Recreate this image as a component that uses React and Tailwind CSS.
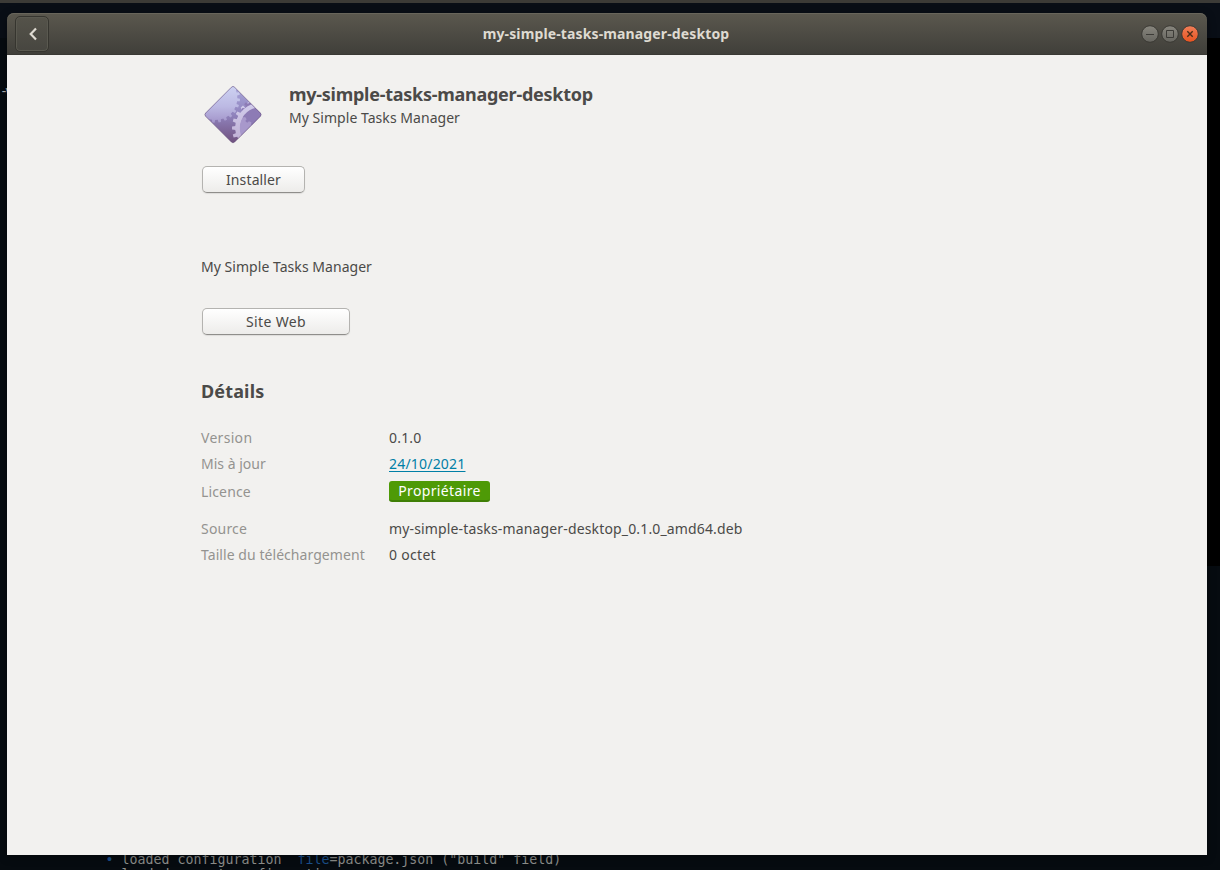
import React from "react";

function gearPath(cx, cy, inner, outer, teeth, offset = 0) {
  const step = (Math.PI * 2) / teeth;
  const point = (r, a) =>
    `${(cx + r * Math.cos(a)).toFixed(1)} ${(cy + r * Math.sin(a)).toFixed(1)}`;
  const parts = [];
  for (let i = 0; i < teeth; i += 1) {
    const a = offset + i * step;
    parts.push(
      point(inner, a - step * 0.27),
      point(outer, a - step * 0.19),
      point(outer, a + step * 0.19),
      point(inner, a + step * 0.27)
    );
  }
  return `M${parts.join("L")}Z`;
}

function PackageIcon() {
  return (
    <svg className="block h-[70px] w-[75px]" viewBox="0 0 225 210" aria-hidden="true">
      <defs>
        <linearGradient id="base" x1="0" y1="0" x2="0" y2="1">
          <stop offset="0" stopColor="#aaa9dc" />
          <stop offset="0.5" stopColor="#9083bd" />
          <stop offset="1" stopColor="#6e4e7b" />
        </linearGradient>
        <linearGradient id="gear" gradientUnits="userSpaceOnUse" x1="0" y1="25" x2="0" y2="135">
          <stop offset="0" stopColor="#cdd2f2" />
          <stop offset="0.55" stopColor="#bcb9e3" />
          <stop offset="1" stopColor="#a294c9" />
        </linearGradient>
        <linearGradient id="ring" gradientUnits="userSpaceOnUse" x1="0" y1="65" x2="0" y2="195">
          <stop offset="0" stopColor="#d3cfee" />
          <stop offset="1" stopColor="#bfaed3" />
        </linearGradient>
        <clipPath id="diamond">
          <path d="M109 28Q114 22 119 28L196 105Q201 110 196 115L119 192Q114 197 109 192L32 115Q27 110 32 105Z" />
        </clipPath>
      </defs>
      <g clipPath="url(#diamond)">
        <path fill="url(#base)" d="M25 20H205V200H25Z" />
        <path fill="url(#gear)" d={gearPath(61, 60, 66, 74, 24, 0.08)} />
        <path fill="url(#ring)" d={gearPath(196, 150, 74, 85, 22, 0)} />
        <circle cx="196" cy="150" r="62" fill="#a898cb" />
        <path fill="#8d7bb5" d={gearPath(180, 102, 33, 40, 12, 0.2)} />
        <path
          fill="none"
          stroke="url(#ring)"
          strokeWidth="13"
          d="M129 165A68.5 68.5 0 0 1 196 81.5"
        />
      </g>
      <path
        fill="none"
        stroke="#5b4472"
        strokeOpacity="0.5"
        strokeWidth="3"
        d="M109 28Q114 22 119 28L196 105Q201 110 196 115L119 192Q114 197 109 192L32 115Q27 110 32 105Z"
      />
    </svg>
  );
}

function TitleBar() {
  return (
    <header className="flex h-[42px] items-center rounded-t-[7px] border-b border-[#3a3934] bg-linear-to-b from-[#5b584e] to-[#403f3a] pr-2 pl-2 shadow-[inset_0_1px_0_#68655b]">
      <button
        type="button"
        aria-label="Retour"
        className="flex h-9 w-[34px] items-center justify-center rounded-[5px] border border-[#36352f] bg-linear-to-b from-[#55534a] to-[#474640] pl-px shadow-[inset_0_0_0_1px_#5a5950]"
      >
        <svg className="h-3.5 w-3.5" viewBox="0 0 14 14" fill="none">
          <path d="M10 1.5L4.7 7L10 12.5" stroke="#dfdbd2" strokeWidth="2.2" />
        </svg>
      </button>
      <h1 className="flex-1 pl-[24px] text-center text-[14px] leading-5 font-bold text-[#dfdbd2]">
        <span className="tracking-[0.13px]">my-simple-tasks-manager-desktop</span>
      </h1>
      <svg className="h-5 w-[60px]" viewBox="0 0 60 20" fill="none">
        <defs>
          <linearGradient id="grey" x1="0" y1="0" x2="0" y2="1">
            <stop stopColor="#88867e" />
            <stop offset="1" stopColor="#66655f" />
          </linearGradient>
          <linearGradient id="orange" x1="0" y1="0" x2="0" y2="1">
            <stop stopColor="#f07f59" />
            <stop offset="1" stopColor="#e9531f" />
          </linearGradient>
        </defs>
        <circle cx="11" cy="10" r="8.3" fill="url(#grey)" stroke="#3a3934" />
        <circle cx="31" cy="10" r="8.3" fill="url(#grey)" stroke="#3a3934" />
        <circle cx="51" cy="10" r="8.3" fill="url(#orange)" stroke="#3a3934" />
        <path d="M7 10.5H15" stroke="#3c3b37" />
        <path d="M27.5 6.5H34.5V13.5H27.5Z" stroke="#3c3b37" />
        <path d="M48.3 7.3L53.7 12.7M53.7 7.3L48.3 12.7" stroke="#4b2d18" strokeWidth="1.4" />
      </svg>
    </header>
  );
}

function Button({ className, children }) {
  return (
    <button
      type="button"
      className={`block rounded-[5px] border border-[#b4b3b0] border-b-[#8f8e8b] bg-linear-to-b from-white to-[#edecea] text-center leading-[26px] shadow-[0_1px_1px_#dddcda] ${className}`}
    >
      {children}
    </button>
  );
}

function Detail({ label, labelClass, className, children }) {
  return (
    <div className={`flex items-center ${className}`}>
      <dt className="w-[188px] text-[#949390]">
        <span className={labelClass}>{label}</span>
      </dt>
      <dd>{children}</dd>
    </div>
  );
}

function Terminal() {
  return (
    <div className="absolute inset-0 flex flex-col bg-[#060b10] font-['DejaVu_Sans_Mono','Liberation_Mono',monospace] text-[13.29px] leading-4 text-[#8d8f8c]">
      <div className="h-[3px] bg-[#3c3b37]" />
      <div className="h-[35px] bg-[#090e16]" />
      <div className="flex h-[528px] justify-between">
        <div className="w-5 pt-[46px] text-[#b5b5b5]">
          <span className="block w-5 tracking-[-3px]">-v</span>
        </div>
        <div className="w-[14px] bg-black" />
      </div>
      <div className="flex-1" />
      <div className="h-[19px] whitespace-pre">
        <p className="h-[15px] pt-px pl-[105.5px]">
          <span className="text-[#1a4f8c]">•</span>
          {" loaded configuration  "}
          <span className="text-[#1a4f8c]">file</span>
          {"=package.json (\"build\" field)"}
        </p>
        <p className="pt-px pl-[105.5px]">{"  loaded parent configuration"}</p>
      </div>
    </div>
  );
}

export default function App() {
  return (
    <div className="relative h-[870px] w-[1220px] overflow-hidden font-['Noto_Sans','Open_Sans',sans-serif] text-[14px] text-[#4b4a48]">
      <Terminal />
      <div className="relative px-[7px] pt-[13px] pr-[13px]">
        <div className="rounded-t-[7px] shadow-[0_2px_8px_rgba(0,0,0,0.4)]">
          <TitleBar />
          <main className="h-[800px] bg-[#f2f1ef] pl-[194px] leading-5">
            <section className="flex pt-[23px]">
              <div className="-ml-1.5 w-[94px]">
                <PackageIcon />
              </div>
              <div className="pt-1">
                <h2 className="text-[18px] leading-6 font-bold">
                  <span className="tracking-[-0.26px]">my-simple-tasks-manager-desktop</span>
                </h2>
                <p className="pt-0.5">
                  <span className="tracking-[0.04px]">My Simple Tasks Manager</span>
                </p>
              </div>
            </section>
            <Button className="mt-[18px] ml-px h-[27px] w-[103px] tracking-[0.13px]">Installer</Button>
            <p className="mt-[64px]">
              <span className="tracking-[0.04px]">My Simple Tasks Manager</span>
            </p>
            <Button className="mt-[31px] ml-px h-[27px] w-[148px] tracking-[0.38px]">Site Web</Button>
            <h3 className="mt-11 text-[18px] leading-6 font-bold">
              <span className="tracking-[0.15px]">Détails</span>
            </h3>
            <dl className="mt-[22px]">
              <Detail label="Version" labelClass="tracking-[0.3px]" className="h-[26px]">
                <span className="tracking-[0.2px]">0.1.0</span>
              </Detail>
              <Detail label="Mis à jour" className="h-[26px]">
                <a className="tracking-[0.2px] text-[#007fa6] underline underline-offset-2">24/10/2021</a>
              </Detail>
              <Detail label="Licence" labelClass="tracking-[0.15px]" className="mt-1 h-[22px]">
                <span className="-mt-0.5 block h-[21px] w-[101px] rounded-[3px] border-b-2 border-[#3f7f05] bg-[#4e9a06] text-center leading-[19px] tracking-[0.36px] text-white">
                  Propriétaire
                </span>
              </Detail>
              <Detail label="Source" labelClass="tracking-[0.2px]" className="mt-[13px] h-[26px]">
                <span className="tracking-[0.15px]">my-simple-tasks-manager-desktop_0.1.0_amd64.deb</span>
              </Detail>
              <Detail
                label="Taille du téléchargement"
                labelClass="tracking-[0.06px]"
                className="h-[26px]"
              >
                <span className="tracking-[0.3px]">0 octet</span>
              </Detail>
            </dl>
          </main>
        </div>
      </div>
    </div>
  );
}
